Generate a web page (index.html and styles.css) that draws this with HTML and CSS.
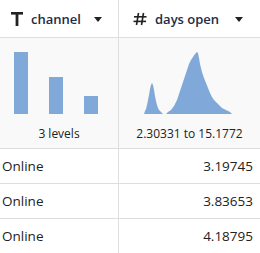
FILE: index.html
```html
<!DOCTYPE html>
<html>
  <head>
    <title>Data table</title>
    <meta name="viewport" content="width=device-width, initial-scale=1.0">
    <link rel="stylesheet" href="styles.css">
  </head>
  <body>
    <div class="table">
      <div class="head cell first">
        <svg class="icon" width="12" height="14" viewBox="0 0 12 14">
          <rect x="0" y="0" width="12" height="2.6" fill="#222"/>
          <rect x="4.6" y="0" width="2.8" height="14" fill="#222"/>
        </svg>
        <span class="name">channel</span>
        <span class="caret"></span>
      </div>
      <div class="head cell">
        <svg class="icon" width="14" height="14" viewBox="0 0 14 14">
          <g stroke="#222" stroke-width="1.6" fill="none">
            <line x1="5.5" y1="1" x2="3.5" y2="13"/>
            <line x1="10.5" y1="1" x2="8.5" y2="13"/>
            <line x1="1" y1="4.8" x2="13.5" y2="4.8"/>
            <line x1="0.5" y1="9.4" x2="13" y2="9.4"/>
          </g>
        </svg>
        <span class="name">days open</span>
        <span class="caret"></span>
      </div>

      <div class="summary cell first">
        <svg width="118" height="66" viewBox="0 0 118 66">
          <rect x="14" y="4" width="14" height="62" fill="#80a9da"/>
          <rect x="49" y="29" width="14" height="37" fill="#80a9da"/>
          <rect x="84" y="48" width="14" height="18" fill="#80a9da"/>
        </svg>
        <div class="label">3 levels</div>
      </div>
      <div class="summary cell">
        <svg width="141" height="66" viewBox="119 48 141 66">
          <polygon fill="#80a9da" points="144,114 145,111 146,109 147,105 148,100 149,95 150,89 151,85 152,83 153,85 154,90 155,96 156,101 157,105 158,108 159,110 161,112 163,114"/>
          <polygon fill="#80a9da" points="166,114 168,112 171,110 174,106 177,100 179,94 181,88 183,82 185,76 187,70 189,64 191,60 193,57 195,54 197,52 198,53 199,58 200,64 202,72 204,78 206,83 208,88 210,93 212,97 214,100 216,102 218,104 220,106 222,108 224,109 226,110 228,111 230,112 232,114"/>
        </svg>
        <div class="label">2.30331 to 15.1772</div>
      </div>

      <div class="row cell first">Online</div>
      <div class="row cell num">3.19745</div>
      <div class="row cell first">Online</div>
      <div class="row cell num">3.83653</div>
      <div class="row cell first">Online</div>
      <div class="row cell num">4.18795</div>
    </div>
  </body>
</html>
```

FILE: styles.css
```css
body {
  margin: 0;
  padding: 0;
  background-color: white;
  font-family: 'Open Sans', sans-serif;
  color: #222;
  overflow: hidden;
}
.table {
  display: grid;
  grid-template-columns: 119px 141px;
}
.cell {
  border-bottom: 1px solid #dedede;
  box-sizing: border-box;
}
.first {
  border-right: 1px solid #dedede;
}
.head {
  height: 38px;
  display: flex;
  align-items: center;
  padding-left: 11px;
  background-color: white;
}
.head + .head {
  padding-left: 14px;
}
.head .icon {
  flex: none;
  margin-top: 1px;
}
.head .name {
  font-size: 13px;
  font-weight: 600;
  color: #1d2c44;
  margin-left: 8px;
}
.caret {
  width: 0;
  height: 0;
  border-left: 4.5px solid transparent;
  border-right: 4.5px solid transparent;
  border-top: 5px solid #222;
  margin-left: 13px;
  margin-top: 2px;
}
.head + .head .caret {
  margin-left: 16px;
}
.summary {
  height: 111px;
  background-color: #f9f9f9;
  padding-top: 10px;
}
.summary svg {
  display: block;
}
.label {
  text-align: center;
  font-size: 12px;
  line-height: 16px;
  margin-top: 12px;
  color: #222;
}
.row {
  height: 35px;
  display: flex;
  align-items: center;
  font-size: 13.5px;
  padding-left: 2px;
}
.num {
  justify-content: flex-end;
  padding-right: 7px;
}
```
